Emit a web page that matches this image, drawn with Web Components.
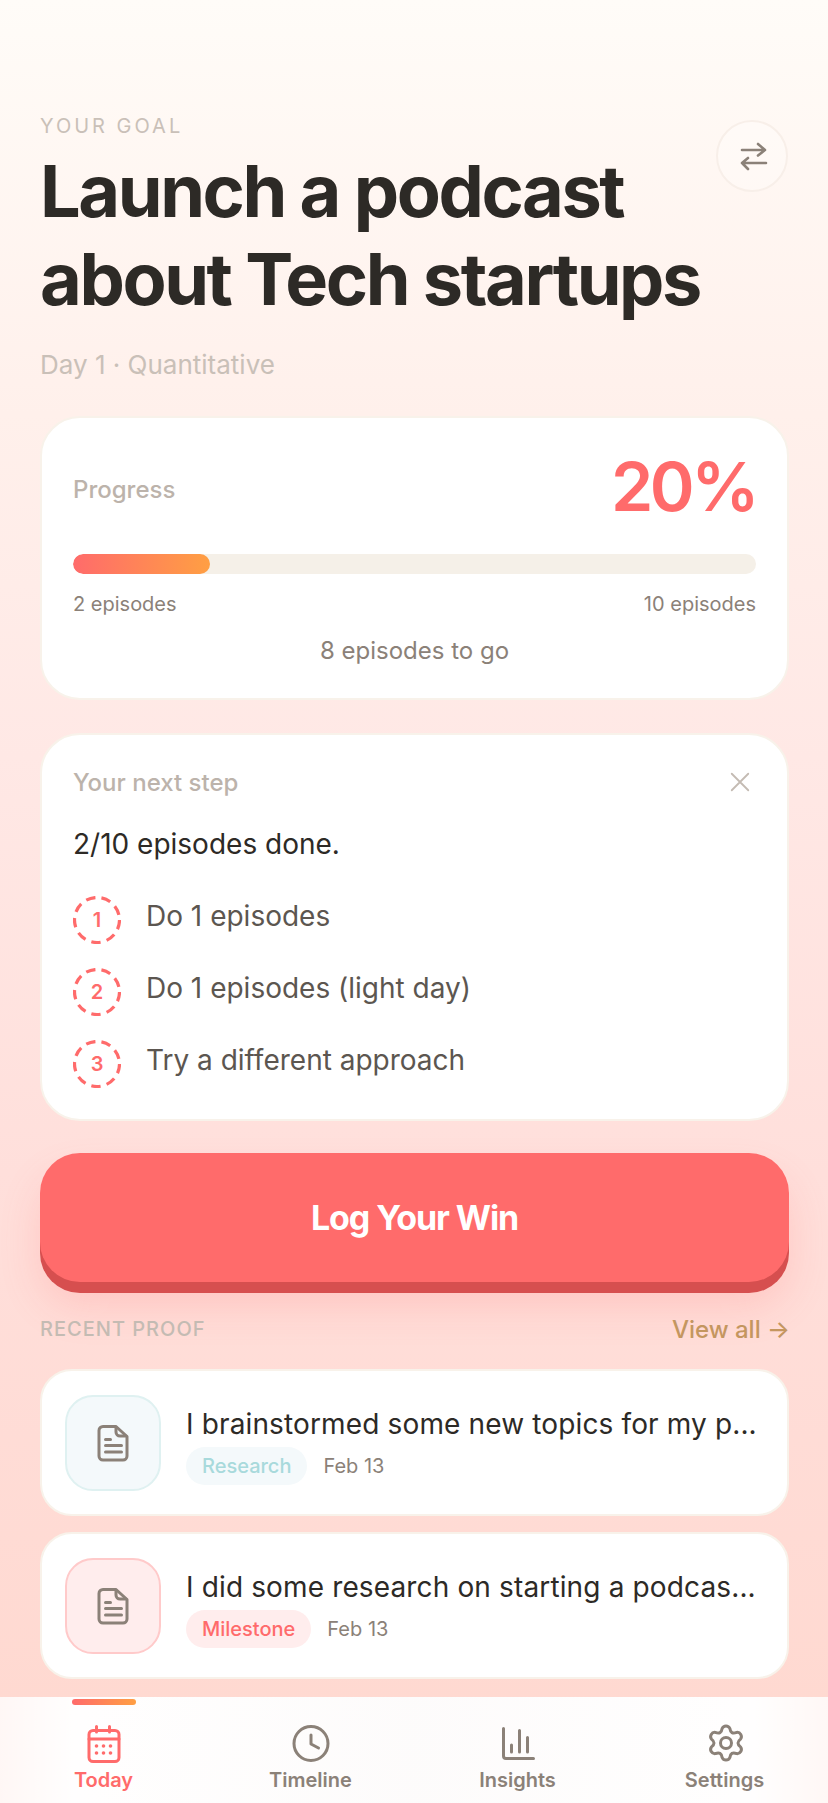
<!DOCTYPE html>
<html lang="en">
<head>
<meta charset="utf-8">
<title>Today</title>
<style>
  html, body { margin: 0; height: 100%; }
  body {
    width: 828px; height: 1803px; overflow: hidden;
    display: flex; flex-direction: column;
    font-family: Inter, "Liberation Sans", sans-serif;
    color: #2d2a26;
    background: linear-gradient(180deg, #fffcf8 0%, #fff0eb 23%, #ffe8e5 42%, #ffdfdb 65%, #ffd8cf 100%);
  }
  main { flex: 1; min-height: 0; display: flex; flex-direction: column; padding: 0 39px 0 40px; overflow: hidden; }
</style>
</head>
<body>
<main>
  <goal-header></goal-header>
  <progress-card></progress-card>
  <next-step>
    <step-item n="1">Do 1 episodes</step-item>
    <step-item n="2">Do 1 episodes (light day)</step-item>
    <step-item n="3">Try a different approach</step-item>
  </next-step>
  <log-button>Log Your Win</log-button>
  <proof-section>
    <proof-item kind="research" tag="Research" date="Feb 13">I brainstormed some new topics for my p...</proof-item>
    <proof-item kind="milestone" tag="Milestone" date="Feb 13">I did some research on starting a podcas...</proof-item>
  </proof-section>
</main>
<tab-bar>
  <tab-item label="Today" active><svg viewBox="0 0 46 46" fill="none" stroke="currentColor" stroke-width="3" stroke-linecap="round" stroke-linejoin="round"><rect x="8" y="10.500" width="30" height="31" rx="4"/><path d="M8 19h30M15.500 6.500V12M28.500 6.500V12"/><g fill="currentColor" stroke="none"><circle cx="15.500" cy="26" r="1.800"/><circle cx="22.500" cy="26" r="1.800"/><circle cx="29.500" cy="26" r="1.800"/><circle cx="15.500" cy="33" r="1.800"/><circle cx="22.500" cy="33" r="1.800"/><circle cx="29.500" cy="33" r="1.800"/></g></svg></tab-item>
  <tab-item label="Timeline"><svg viewBox="0 0 46 46" fill="none" stroke="currentColor" stroke-width="3" stroke-linecap="round" stroke-linejoin="round"><circle cx="23" cy="23.500" r="17"/><path d="M23 15v9l7.500 4"/></svg></tab-item>
  <tab-item label="Insights"><svg viewBox="0 0 46 46" fill="none" stroke="currentColor" stroke-width="3" stroke-linecap="round" stroke-linejoin="round"><path d="M8.500 8.500V36a2.500 2.500 0 0 0 2.500 2.500h27.500"/><path d="M16.500 25v7M24.500 10.500V32M32.500 17.500V32"/></svg></tab-item>
  <tab-item label="Settings"><svg viewBox="0 0 46 46" fill="none" stroke="currentColor" stroke-width="3" stroke-linecap="round" stroke-linejoin="round"><path d="M20.120 8.510A4.200 4.200 0 0 1 27.880 8.510Q28.750 14.770 34.600 12.400A4.200 4.200 0 0 1 38.490 19.120Q33.500 23 38.490 26.880A4.200 4.200 0 0 1 34.600 33.600Q28.750 31.230 27.880 37.490A4.200 4.200 0 0 1 20.120 37.490Q19.250 31.230 13.400 33.600A4.200 4.200 0 0 1 9.510 26.880Q14.500 23 9.510 19.120A4.200 4.200 0 0 1 13.400 12.400Q19.250 14.770 20.120 8.510Z"/><circle cx="24" cy="23" r="5.500"/></svg></tab-item>
</tab-bar>

<script>
  // small helper, every element gets the same open shadow setup
  function shadow(el, html) {
    el.attachShadow({ mode: 'open' }).innerHTML = html;
  }

  class GoalHeader extends HTMLElement {
    constructor() {
      super();
      shadow(this, `<style>
        :host { display: block; position: relative; padding: 112px 0 33px; }
        .eyebrow { font-size: 20px; line-height: 28px; letter-spacing: 3px; color: #c9c0b8; text-transform: uppercase; }
        h1 { margin: 0; padding-top: 7px; font: 700 72px/88px Inter, sans-serif; letter-spacing: -2.400px; color: #2d2a26; }
        .day { margin-top: 24px; font-size: 26px; line-height: 36px; color: #c9c0b8; }
        button {
          position: absolute; top: 120px; right: 1px; box-sizing: border-box; width: 72px; height: 72px; padding: 0 0 0 2px;
          display: flex; align-items: center; justify-content: center;
          border: 2px solid #f8efe9; border-radius: 50%; background: rgba(255,255,255,.25); color: #8b8178;
        }
        svg { width: 32px; height: 32px; }
      </style>
      <div class="eyebrow">Your goal</div>
      <h1>Launch a podcast<br>about Tech startups</h1>
      <div class="day">Day 1 · Quantitative</div>
      <button aria-label="Switch goal"><svg viewBox="0 0 32 32" fill="none" stroke="currentColor" stroke-width="2.600" stroke-linecap="round" stroke-linejoin="round"><path d="M5 10h23M21 4l7 6-7 5.500"/><path d="M29 23H5M11 18l-6 5 6 6"/></svg></button>`);
    }
  }

  class ProgressCard extends HTMLElement {
    constructor() {
      super();
      shadow(this, `<style>
        :host { display: block; box-sizing: border-box; height: 284px; padding: 30px 31px 0 31px; background: #fff; border: 2px solid #f8f2ea; border-radius: 40px; }
        .top { display: flex; justify-content: space-between; align-items: center; height: 76px; }
        .label { margin-top: 6px; font-size: 24px; font-weight: 500; color: #bcb3ab; }
        .pct { font: 600 68px/76px Inter, sans-serif; letter-spacing: -3.500px; color: #ff6b6b; }
        .track { margin-top: 30px; height: 20px; border-radius: 10px; background: #f5f0e8; overflow: hidden; }
        .fill { width: 20%; height: 100%; border-radius: 10px; background: linear-gradient(90deg, #ff6b6b, #ff9f43); }
        .ends { display: flex; justify-content: space-between; margin-top: 16px; font-size: 20px; line-height: 28px; color: #8b8178; }
        .left { margin-top: 17px; text-align: center; font-size: 24px; line-height: 32px; color: #8b8178; }
      </style>
      <div class="top"><span class="label">Progress</span><span class="pct">20%</span></div>
      <div class="track"><div class="fill"></div></div>
      <div class="ends"><span>2 episodes</span><span>10 episodes</span></div>
      <div class="left">8 episodes to go</div>`);
    }
  }

  class NextStep extends HTMLElement {
    constructor() {
      super();
      shadow(this, `<style>
        :host { display: block; box-sizing: border-box; height: 388px; margin-top: 33px; padding: 31px 31px 0 31px; background: #fff; border: 2px solid #f8f2ea; border-radius: 40px; }
        .head { display: flex; justify-content: space-between; align-items: center; height: 32px; font-size: 24px; font-weight: 500; color: #bcb3ab; }
        svg { width: 22px; height: 22px; margin-right: 5px; }
        .done { margin: 26px 0 32px; font-size: 28px; line-height: 40px; color: #2d2a26; }
        .steps { display: flex; flex-direction: column; gap: 24px; }
      </style>
      <div class="head"><span>Your next step</span><svg viewBox="0 0 24 24" fill="none" stroke="#c4bbb3" stroke-width="2" stroke-linecap="round"><path d="M3 3l18 18M21 3L3 21"/></svg></div>
      <div class="done">2/10 episodes done.</div>
      <div class="steps"><slot></slot></div>`);
    }
  }

  class StepItem extends HTMLElement {
    constructor() {
      super();
      shadow(this, `<style>
        :host { display: flex; align-items: center; gap: 25px; height: 48px; font-size: 28px; color: #5c5650; }
        .num { position: relative; flex: none; width: 48px; height: 48px; display: flex; align-items: center; justify-content: center; font-size: 20px; font-weight: 600; color: #ff6b6b; }
        svg { position: absolute; inset: 0; }
        .txt { margin-top: -8px; }
      </style>
      <span class="num"><svg width="48" height="48" viewBox="0 0 48 48"><circle cx="24" cy="24" r="22.500" fill="none" stroke="#ff6b6b" stroke-width="3.200" stroke-dasharray="9.500 6.200"/></svg>${this.getAttribute('n')}</span>
      <span class="txt"><slot></slot></span>`);
    }
  }

  class LogButton extends HTMLElement {
    constructor() {
      super();
      shadow(this, `<style>
        :host { display: block; margin-top: 32px; }
        button {
          display: block; width: 100%; height: 129px; padding: 0; border: 0; border-radius: 40px;
          background: #ff6b6b; color: #fff; font: 700 34px/40px Inter, sans-serif; letter-spacing: -1.100px;
          box-shadow: 0 11px 0 #d64f4f, 0 24px 40px rgba(255,107,107,.2);
        }
      </style><button><slot></slot></button>`);
    }
  }

  class ProofSection extends HTMLElement {
    constructor() {
      super();
      shadow(this, `<style>
        :host { display: block; margin-top: 31px; }
        .head { display: flex; justify-content: space-between; align-items: center; height: 32px; margin-bottom: 24px; }
        .title { font-size: 20px; font-weight: 500; letter-spacing: 1px; color: #c4bbb3; text-transform: uppercase; }
        .all { margin-right: -1px; font-size: 24px; font-weight: 500; color: #c4965f; }
        .list { display: flex; flex-direction: column; gap: 16px; }
      </style>
      <div class="head"><span class="title">Recent proof</span><span class="all">View all →</span></div>
      <div class="list"><slot></slot></div>`);
    }
  }

  class ProofItem extends HTMLElement {
    constructor() {
      super();
      const kind = this.getAttribute('kind');
      const c = kind === 'milestone'
        ? { box: '#ffeded', line: '#ffcaca', tag: '#ff6b6b' }
        : { box: '#f4f9fb', line: '#dff1f1', tag: '#a8dadc' };
      shadow(this, `<style>
        :host { display: flex; box-sizing: border-box; align-items: center; gap: 25px; height: 147px; padding: 0 30px 0 23px; background: #fff; border: 2px solid #f8f2ea; border-radius: 32px; }
        .icon { flex: none; box-sizing: border-box; width: 96px; height: 96px; display: flex; align-items: center; justify-content: center; border-radius: 28px; background: ${c.box}; border: 2px solid ${c.line}; color: #8b8178; }
        svg { width: 40px; height: 40px; }
        .body { flex: 1; min-width: 0; padding-top: 4px; }
        .name { font-size: 28px; line-height: 40px; letter-spacing: .14px; color: #2d2a26; white-space: nowrap; }
        .meta { display: flex; align-items: center; gap: 16px; margin-top: 3px; font-size: 20px; color: #8b8178; }
        .tag { padding: 0 16px; height: 38px; line-height: 38px; border-radius: 19px; background: ${c.box}; color: ${c.tag}; font-weight: 500; }
      </style>
      <div class="icon"><svg viewBox="0 0 40 40" fill="none" stroke="currentColor" stroke-width="3" stroke-linecap="round" stroke-linejoin="round"><path d="M23 3.500H10a4 4 0 0 0-4 4V33a4 4 0 0 0 4 4h20a4 4 0 0 0 4-4V13.500Z"/><path d="M23 4v5a4 4 0 0 0 4 4h6"/><path d="M12.500 16.500h5M12.500 22.500h16M12.500 29h16"/></svg></div>
      <div class="body">
        <div class="name"><slot></slot></div>
        <div class="meta"><span class="tag">${this.getAttribute('tag')}</span><span>${this.getAttribute('date')}</span></div>
      </div>`);
    }
  }

  class TabBar extends HTMLElement {
    constructor() {
      super();
      shadow(this, `<style>
        :host { display: grid; flex: none; grid-template-columns: repeat(4, 1fr); height: 106px; background: linear-gradient(90deg, rgba(255,255,255,.8), rgba(255,255,255,.98) 9%, rgba(253,252,252,.98) 50%, rgba(255,255,255,.98) 91%, rgba(255,255,255,.8)); }
      </style><slot></slot>`);
    }
  }

  class TabItem extends HTMLElement {
    constructor() {
      super();
      const on = this.hasAttribute('active');
      shadow(this, `<style>
        :host { position: relative; display: flex; flex-direction: column; align-items: center; padding-top: 23px; font-size: 20px; font-weight: 600; color: ${on ? '#ff6b6b' : '#8b8178'}; }
        .bar { position: absolute; top: 2px; left: 72px; width: 64px; height: 6px; border-radius: 3px; background: linear-gradient(90deg, #ff6b6b, #ff9f43); }
        ::slotted(svg) { display: block; width: 46px; height: 46px; }
        .label { line-height: 28px; }
      </style>
      ${on ? '<span class="bar"></span>' : ''}
      <slot></slot>
      <span class="label">${this.getAttribute('label')}</span>`);
    }
  }

  customElements.define('goal-header', GoalHeader);
  customElements.define('progress-card', ProgressCard);
  customElements.define('next-step', NextStep);
  customElements.define('step-item', StepItem);
  customElements.define('log-button', LogButton);
  customElements.define('proof-section', ProofSection);
  customElements.define('proof-item', ProofItem);
  customElements.define('tab-bar', TabBar);
  customElements.define('tab-item', TabItem);
</script>
</body>
</html>
